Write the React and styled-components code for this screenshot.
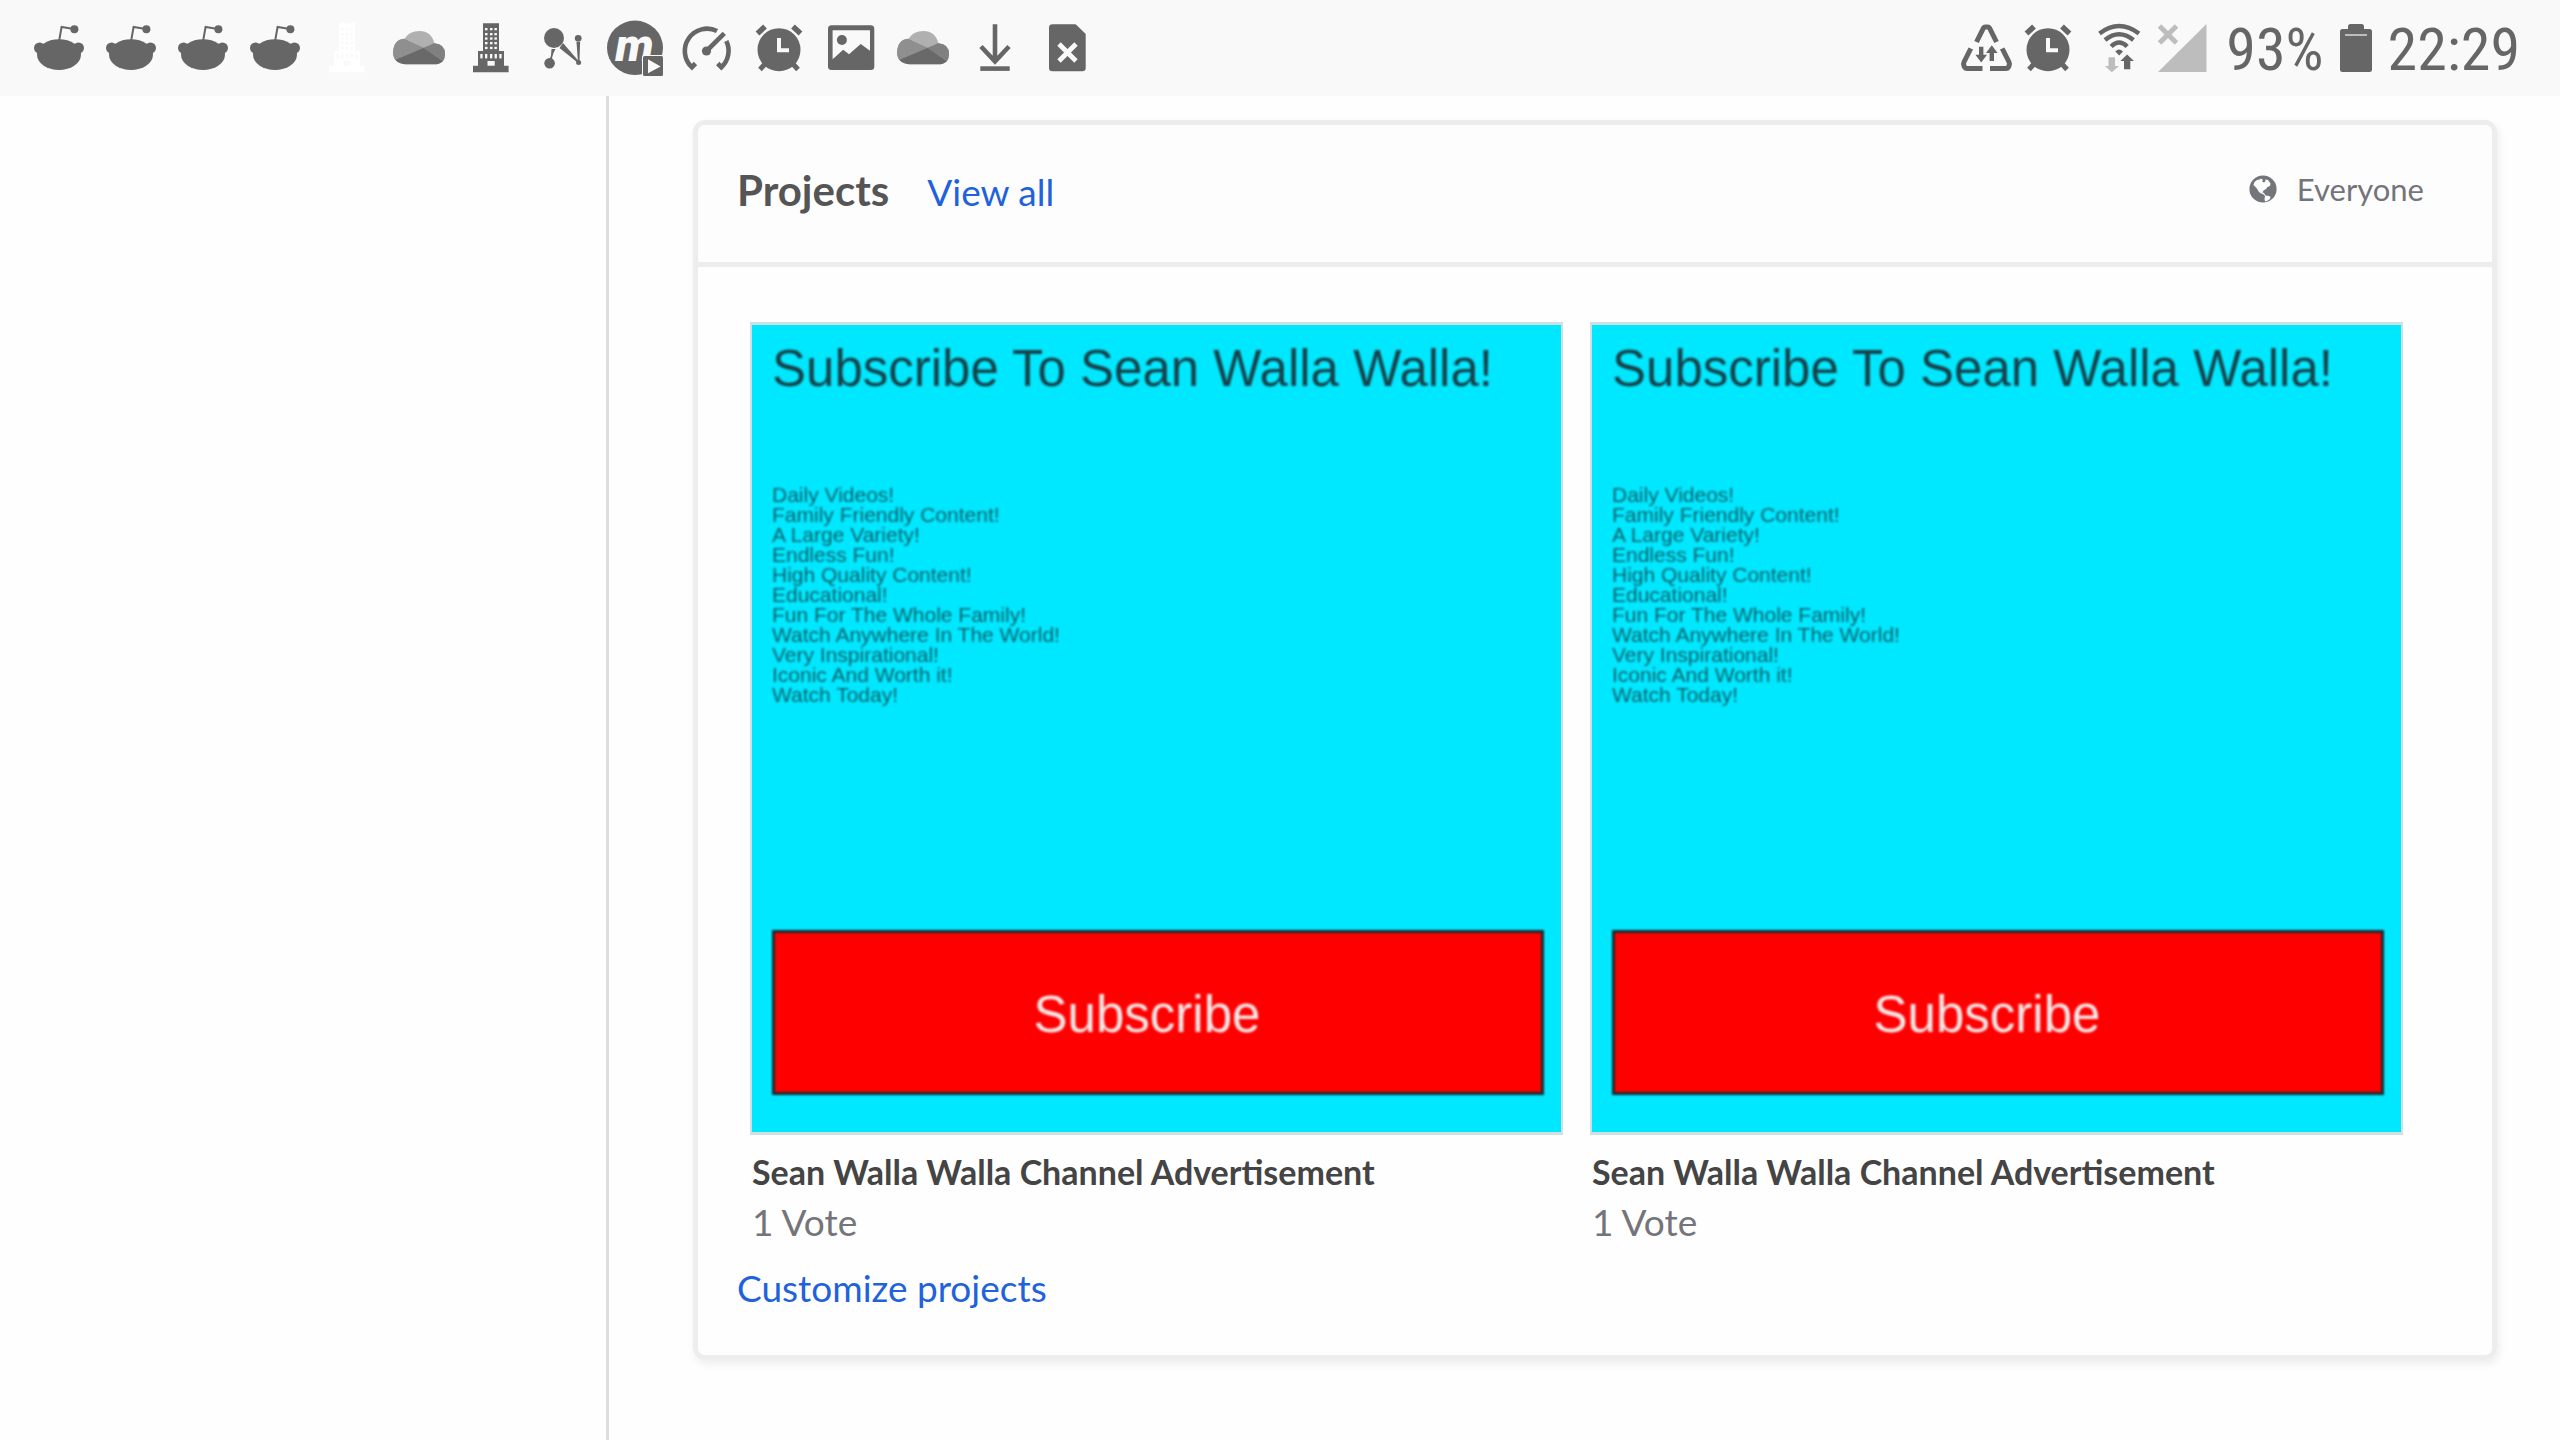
import React from "react";
import styled, { createGlobalStyle } from "styled-components";

const INK = "#666666";
const FAINT = "#bdbdbd";
const BAR = "#f9f9f9";

const GlobalStyle = createGlobalStyle`
  *, *::before, *::after { box-sizing: border-box; }
  body {
    margin: 0;
    background: #fefefe;
    font-family: Lato, "Open Sans", sans-serif;
  }
  h2, h3, p, ul { margin: 0; padding: 0; font-weight: inherit; }
  ul { list-style: none; }
`;

const Page = styled.div`
  display: flex;
  flex-direction: column;
  min-height: 100vh;
`;

const StatusBar = styled.header`
  display: flex;
  align-items: center;
  justify-content: space-between;
  height: 96px;
  padding: 0 40px 0 31px;
  background: ${BAR};
  color: ${INK};
`;

const IconGroup = styled.div`
  display: flex;
  align-items: center;
  gap: ${(p) => p.$gap}px;
`;

const Glyph = styled.svg`
  display: block;
  flex: none;
  width: ${(p) => p.$w || 56}px;
  height: 60px;
  overflow: visible;
`;

const Reading = styled.span`
  padding-top: 4px;
  font-family: "Roboto Condensed", Roboto, sans-serif;
  font-size: 60px;
  line-height: 60px;
`;

const Columns = styled.div`
  display: flex;
  flex: 1;
`;

const Sidebar = styled.aside`
  flex: none;
  width: 609px;
  border-right: 3px solid #dddddd;
`;

const Main = styled.main`
  flex: 1;
  padding: 24px 63px 80px 84px;
`;

const Card = styled.section`
  overflow: hidden;
  border: 5px solid #ededed;
  border-radius: 12px;
  box-shadow: 2px 4px 8px rgba(0, 0, 0, 0.07);
`;

const CardHeader = styled.div`
  display: flex;
  align-items: baseline;
  padding: 39px 68px 45px 39px;
  border-bottom: 5px solid #ededed;
  background: #fdfdfd;
`;

const CardTitle = styled.h2`
  color: #555555;
  font-size: 42px;
  font-weight: 700;
  line-height: 53px;
`;

const TextLink = styled.a`
  color: #1f62dc;
  font-size: 37px;
  line-height: 50px;
  text-decoration: none;
`;

const HeaderLink = styled(TextLink)`
  margin-left: 38px;
`;

const Audience = styled.span`
  display: flex;
  align-items: center;
  align-self: flex-start;
  gap: 20px;
  margin-left: auto;
  color: #74757a;
  font-size: 31px;
  line-height: 50px;
`;

const GlobeIcon = styled.svg`
  display: block;
  width: 28px;
  height: 28px;
`;

const CardBody = styled.div`
  padding: 55px 89px 42px 39px;
`;

const Projects = styled.ul`
  display: grid;
  grid-template-columns: 1fr 1fr;
  gap: 27px;
  padding-left: 13px;
`;

const Project = styled.li`
  display: flex;
  flex-direction: column;
`;

const Poster = styled.div`
  aspect-ratio: 1;
  border: solid #cfe0e3;
  border-width: 3px 2px;
  background: #00e8ff;
  font-family: "Liberation Sans", Arial, sans-serif;
`;

const PosterArt = styled.div`
  display: flex;
  flex-direction: column;
  height: 100%;
  padding: 14px 17px 37px 20px;
  filter: blur(1px);
`;

const PosterTitle = styled.p`
  color: #17424a;
  font-size: 51px;
  line-height: 60px;
`;

const PosterLines = styled.ul`
  margin-top: 86px;
  color: #0b626c;
  font-size: 21px;
  line-height: 20px;
`;

const PosterButton = styled.button`
  height: 165px;
  margin-top: auto;
  padding: 4px 22px 0 0;
  border: 3px solid #1c2b2e;
  background: #ff0000;
  color: #ffe6e6;
  font-family: inherit;
  font-size: 51px;
`;

const ProjectName = styled.h3`
  margin-top: 12px;
  padding-left: 2px;
  color: #444444;
  font-size: 34px;
  font-weight: 700;
  line-height: 50px;
`;

const Votes = styled.p`
  padding-left: 2px;
  color: #74757a;
  font-size: 37px;
  line-height: 50px;
`;

const CardFooter = styled.div`
  display: flex;
  padding-top: 16px;
`;

function Reddit() {
  return (
    <Glyph viewBox="0 0 56 60" fill={INK}>
      <ellipse cx="28" cy="36.6" rx="22" ry="15.4" />
      <circle cx="8.6" cy="30" r="5.6" />
      <circle cx="47.4" cy="30" r="5.6" />
      <path d="M28.3 22 30.6 8.9 43 11" fill="none" stroke={INK} strokeWidth="2" />
      <circle cx="43.4" cy="11.2" r="4" />
    </Glyph>
  );
}

function Building({ color, hole }) {
  return (
    <Glyph viewBox="0 0 56 60" fill={color}>
      <path d="M20 5.3h16V33h5v14.7h4.6v6.6H10v-6.6h5V33h5z" />
      <g fill={hole}>
        {[10, 15, 19.4, 24, 28.8].map((y) =>
          [22, 27, 31.4].map((x) => <rect key={`${x}-${y}`} x={x} y={y} width="2.5" height="2.3" />)
        )}
        {[17.3, 22, 27, 31.6, 36.3].map((x) => (
          <rect key={x} x={x} y="36" width="2.3" height="4.4" />
        ))}
        <rect x="24.5" y="43" width="7.2" height="4.7" />
      </g>
    </Glyph>
  );
}

function Cloud({ id }) {
  return (
    <Glyph viewBox="0 0 56 60">
      <clipPath id={id}>
        <path d="M13.600 20.700Q18 13 28.600 13 40 13 43.500 25.300 54 26 54 36 54 46.300 43 46.300H14Q2 45 2 34 3 21 13.600 20.700z" />
      </clipPath>
      <g clipPath={`url(#${id})`}>
        <path d="M0 0h56v50H0z" fill="#b0b0b0" />
        <path d="M0 14 13.600 21 32.600 29.700 5.400 41.300 0 48z" fill="#8f8f8f" />
        <path d="M56 16 43 25.300 32.600 29.700 49.400 41.300 56 46z" fill="#808080" />
        <path d="M32.600 29.700 0 43.600V50h56v-4.200z" fill="#696969" />
      </g>
    </Glyph>
  );
}

function Nodes() {
  return (
    <Glyph viewBox="0 0 56 60" fill={INK}>
      <circle cx="19" cy="20" r="10" />
      <circle cx="14.600" cy="45.300" r="5.300" />
      <circle cx="43.200" cy="20.300" r="3.400" />
      <circle cx="43.600" cy="44.400" r="2.500" />
      <path d="M16.500 31h4l-2 4-1.500 5 .5 1.500h-3l1.500-4z" />
      <path d="M28 25l16 18.500-1.500 1L24.500 30z" />
      <path d="M41.500 24h3.600l-.6 19h-1.600z" />
    </Glyph>
  );
}

const LogoLetter = styled.text`
  font-family: Roboto, sans-serif;
  font-size: 46px;
  font-style: italic;
  font-weight: 900;
`;

function MPlayer() {
  return (
    <Glyph viewBox="0 0 56 60" fill={INK}>
      <ellipse cx="28" cy="29.800" rx="28" ry="27.200" />
      <LogoLetter x="27.500" y="43" textAnchor="middle" fill={BAR}>m</LogoLetter>
      <rect x="35" y="37" width="22" height="22" rx="2" fill={BAR} />
      <rect x="36" y="38" width="20" height="20" rx="1.500" />
      <path d="M41 41.300v14L53.600 48.500z" fill={BAR} />
    </Glyph>
  );
}

function Gauge() {
  return (
    <Glyph viewBox="0 0 56 60" fill="none" stroke={INK} strokeWidth="4.600">
      <path d="M16.500 45.500 12.800 49.200A22.300 22.300 0 0 1 38 13" />
      <path d="M47.300 23A22.300 22.300 0 0 1 42.400 49.200L38.700 45.500" />
      <path d="M27.500 33 45.300 15.300" />
      <circle cx="27.500" cy="33" r="4.600" fill={INK} stroke="none" />
    </Glyph>
  );
}

function Alarm() {
  return (
    <Glyph viewBox="0 0 56 60" fill={INK}>
      <circle cx="28" cy="31.700" r="21.500" />
      <path d="M6.500 15.500 14 8.500M49.500 15.500 42 8.500" stroke={INK} strokeWidth="5.500" />
      <path d="M9 51.500 14 46M47 51.500 42 46" stroke={INK} strokeWidth="5" />
      <path d="M28 20v12.300h10" fill="none" stroke={BAR} strokeWidth="4" />
    </Glyph>
  );
}

function Picture() {
  return (
    <Glyph viewBox="0 0 56 60" fill={INK}>
      <rect x="5" y="7.300" width="46.300" height="44.700" rx="3.500" />
      <path d="M9.600 12.300H47v20.400L37.700 26 26 36.300l-5.800-4.600L9.600 41.300z" fill={BAR} />
      <circle cx="18.900" cy="22" r="5" />
    </Glyph>
  );
}

function Download() {
  return (
    <Glyph viewBox="0 0 56 60" fill="none" stroke={INK} strokeWidth="4.600">
      <path d="M28 6.300V44M14 28.500 28 43.500l14-15" />
      <path d="M13.300 50.600h29.400" />
    </Glyph>
  );
}

function FileError() {
  return (
    <Glyph viewBox="0 0 56 60" fill={INK}>
      <path d="M13.500 6.300h23.200l10 9.700v34q0 3.300-3.500 3.300H13.500Q10 53.300 10 50V9.600q0-3.300 3.500-3.300z" />
      <path d="M20 26 37 43M37 26 20 43" stroke={BAR} strokeWidth="4.800" />
    </Glyph>
  );
}

function DataSaver() {
  return (
    <Glyph viewBox="0 0 56 60" fill="none" stroke={INK} strokeWidth="5">
      <path d="M18.500 24 25.500 10q.6-1 1.800-1h2.400q1.200 0 1.800 1L38.500 24" />
      <path d="M12.800 30.500 6 44q-1 2 0 4l.8 1.500q.6 1 2.200 1h15.500" />
      <path d="M44.200 30.500 51 44q1 2 0 4l-.8 1.500q-.6 1-2.200 1H32" />
      <g fill={INK} stroke="none">
        <path d="M21 28.700h4.400v8h3.600L23.200 44.500 17.400 36.700H21z" />
        <path d="M31.600 43h4.400v-8h3.600L33.800 27.300 28 35h3.600z" />
      </g>
    </Glyph>
  );
}

function Wifi() {
  return (
    <Glyph viewBox="0 0 56 60" fill="none" stroke={INK} strokeWidth="4.400">
      <path d="M7.500 15.500Q27 .5 47 15.500" />
      <path d="M13 22Q27 10.500 41.500 22" />
      <path d="M19.200 28.500Q27 20.500 35.200 28.500" />
      <g stroke="none">
        <path d="M23.300 33.500Q27 29.500 31 33.500L27.200 37.500z" fill={INK} />
        <path d="M16.500 39.300h6.500v8.700h4L19.800 54.300 12.800 48h3.700z" fill={FAINT} />
        <path d="M32 51.300h6.300V43H42l-6.900-6.500L28.400 43H32z" fill={INK} />
      </g>
    </Glyph>
  );
}

function Signal() {
  return (
    <Glyph viewBox="0 0 56 60" fill={FAINT}>
      <path d="M4 54 52.500 6v48z" />
      <path d="M5.500 8 22.500 25M22.500 8 5.500 25" stroke={FAINT} strokeWidth="5" />
    </Glyph>
  );
}

function Battery() {
  return (
    <Glyph $w={32} viewBox="0 0 32 60" fill={INK}>
      <path d="M8 11V8.500Q8 6 10.500 6h11Q24 6 24 8.500V11h5.500Q32 11 32 13.500v38Q32 54 29.500 54h-27Q0 54 0 51.500v-38Q0 11 2.500 11z" />
      <rect x="5" y="16" width="22" height="2" fill={FAINT} />
    </Glyph>
  );
}

function Globe() {
  return (
    <GlobeIcon viewBox="0 0 28 28">
      <circle cx="14" cy="14" r="13.600" fill="#74757a" />
      <path
        d="M4.500 10 5.500 7 8 5l2.500-.5L12 3.500l2 1.500-1 1.500 2 1 1.500-1.200L16 4.500l3 .5 2.500 3.500L21 11l-2.500 1L17 14l-2.500 1.500-1 2L15 18l1.500 2.500 2.500.2 2.500 1L21 24l-3 2-2 .5-.5-2.500.5-3-2-2-2-.5-2-1.500L7.500 13z"
        fill="#fdfdfd"
      />
    </GlobeIcon>
  );
}

const LINES = [
  "Daily Videos!",
  "Family Friendly Content!",
  "A Large Variety!",
  "Endless Fun!",
  "High Quality Content!",
  "Educational!",
  "Fun For The Whole Family!",
  "Watch Anywhere In The World!",
  "Very Inspirational!",
  "Iconic And Worth it!",
  "Watch Today!",
];

function ProjectTile({ name, votes }) {
  return (
    <Project>
      <Poster>
        <PosterArt>
          <PosterTitle>Subscribe To Sean Walla Walla!</PosterTitle>
          <PosterLines>
            {LINES.map((line) => (
              <li key={line}>{line}</li>
            ))}
          </PosterLines>
          <PosterButton type="button">Subscribe</PosterButton>
        </PosterArt>
      </Poster>
      <ProjectName>{name}</ProjectName>
      <Votes>{votes}</Votes>
    </Project>
  );
}

const PROJECTS = [
  { id: 1, name: "Sean Walla Walla Channel Advertisement", votes: "1 Vote" },
  { id: 2, name: "Sean Walla Walla Channel Advertisement", votes: "1 Vote" },
];

export default function App() {
  return (
    <Page>
      <GlobalStyle />
      <StatusBar>
        <IconGroup $gap={16}>
          <Reddit />
          <Reddit />
          <Reddit />
          <Reddit />
          <Building color="#ffffff" hole={BAR} />
          <Cloud id="cloud-a" />
          <Building color={INK} hole={BAR} />
          <Nodes />
          <MPlayer />
          <Gauge />
          <Alarm />
          <Picture />
          <Cloud id="cloud-b" />
          <Download />
          <FileError />
        </IconGroup>
        <IconGroup $gap={16}>
          <IconGroup $gap={6}>
            <DataSaver />
            <Alarm />
          </IconGroup>
          <IconGroup $gap={6}>
            <Wifi />
            <Signal />
          </IconGroup>
          <Reading>93%</Reading>
          <Battery />
          <Reading>22:29</Reading>
        </IconGroup>
      </StatusBar>
      <Columns>
        <Sidebar />
        <Main>
          <Card>
            <CardHeader>
              <CardTitle>Projects</CardTitle>
              <HeaderLink href="#all">View all</HeaderLink>
              <Audience>
                <Globe />
                Everyone
              </Audience>
            </CardHeader>
            <CardBody>
              <Projects>
                {PROJECTS.map((p) => (
                  <ProjectTile key={p.id} name={p.name} votes={p.votes} />
                ))}
              </Projects>
              <CardFooter>
                <TextLink href="#customize">Customize projects</TextLink>
              </CardFooter>
            </CardBody>
          </Card>
        </Main>
      </Columns>
    </Page>
  );
}
